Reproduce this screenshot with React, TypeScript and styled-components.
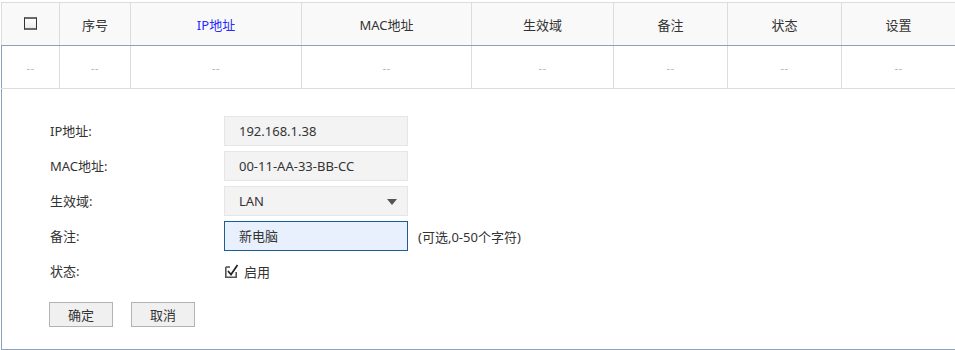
import React from 'react';
import styled, { createGlobalStyle } from 'styled-components';

const GlobalStyle = createGlobalStyle`
  html, body {
    margin: 0;
    padding: 0;
    background: #ffffff;
  }
  body {
    font-family: "Noto Sans", "Noto Sans CJK SC", sans-serif;
    font-size: 13px;
    color: #333333;
  }
  * {
    box-sizing: border-box;
  }
`;

const columns = [
  { key: 'check', title: '', width: 58 },
  { key: 'index', title: '序号', width: 71 },
  { key: 'ip', title: 'IP地址', width: 171, active: true },
  { key: 'mac', title: 'MAC地址', width: 170 },
  { key: 'zone', title: '生效域', width: 142 },
  { key: 'note', title: '备注', width: 114 },
  { key: 'status', title: '状态', width: 114 },
  { key: 'setting', title: '设置', width: 114 },
];

const Page = styled.div`
  width: 955px;
  padding-top: 2px;
  padding-left: 1px;
`;

const Row = styled.div<{ head?: boolean }>`
  display: grid;
  grid-template-columns: ${columns.map(c => `${c.width}px`).join(' ')};
  height: ${props => (props.head ? 44 : 43)}px;
  background: ${props => (props.head ? '#f9f9f9' : '#ffffff')};
  border-top: ${props => (props.head ? '1px solid #dcdcdc' : 'none')};
  border-bottom: 1px solid ${props => (props.head ? '#8ba2ba' : '#dcdcdc')};
`;

const Cell = styled.div<{ first?: boolean; head?: boolean; active?: boolean }>`
  display: flex;
  align-items: center;
  justify-content: center;
  border-left: 1px solid ${props => (props.first && !props.head ? '#8ba2ba' : '#dcdcdc')};
  color: ${props => (props.active ? '#2b2bff' : '#333333')};
  font-size: 13px;
`;

const Dash = styled.span`
  color: #b5b5b5;
  font-size: 11px;
  letter-spacing: 0.5px;
`;

const HeadBox = styled.span`
  display: inline-block;
  width: 13px;
  height: 13px;
  border: 1px solid #333;
  border-top: 2px solid #6a6a6a;
  border-bottom: 2px solid #6a6a6a;
  background: linear-gradient(#ffffff, #ececec);
  margin-top: -2px;
`;

const Panel = styled.div`
  border-left: 1px solid #8ba2ba;
  border-bottom: 1px solid #8ba2ba;
  padding: 27px 0 22px 48px;
  height: 261px;
`;

const Form = styled.div`
  display: grid;
  grid-template-columns: 174px auto;
  row-gap: 5px;
  align-items: center;
`;

const Label = styled.div`
  font-size: 13px;
  color: #333;
  line-height: 30px;
`;

const Field = styled.div`
  display: flex;
  align-items: center;
  gap: 10px;
  height: 30px;
`;

const TextBox = styled.div<{ focused?: boolean }>`
  position: relative;
  width: 184px;
  height: 30px;
  line-height: 28px;
  padding-left: 14px;
  font-size: 13px;
  color: #333;
  background: ${props => (props.focused ? '#e8f0fd' : '#f3f3f3')};
  border: 1px solid ${props => (props.focused ? '#1d5d96' : '#e6e6e6')};
`;

const Arrow = styled.span`
  position: absolute;
  right: 10px;
  top: 12px;
  width: 0;
  height: 0;
  border-left: 5px solid transparent;
  border-right: 5px solid transparent;
  border-top: 6px solid #555;
`;

const Hint = styled.span`
  font-size: 13px;
  color: #333;
`;

const CheckLabel = styled.label`
  display: flex;
  align-items: center;
  gap: 5px;
  font-size: 13px;
  color: #333;
  margin-left: 1px;
`;

const Buttons = styled.div`
  display: flex;
  gap: 18px;
  margin-top: 16px;
  margin-left: -1px;
`;

const Button = styled.button`
  width: 64px;
  height: 25px;
  padding: 0;
  font-family: inherit;
  font-size: 13px;
  color: #333;
  background: #f0f0f0;
  border: 1px solid #b3b3b3;
`;

const CheckIcon = () => (
  <svg width="14" height="16" viewBox="0 0 14 16">
    <path d="M0.8 4 V14.2 H11.2 V9" fill="none" stroke="#555" strokeWidth="1.6" />
    <path d="M0.8 4 H5" fill="none" stroke="#555" strokeWidth="1.6" />
    <path d="M3 8 L6 11.5 L12.5 2" fill="none" stroke="#222" strokeWidth="1.7" />
  </svg>
);

export default function App() {
  return (
    <Page>
      <GlobalStyle />
      <Row head>
        {columns.map((c, i) => (
          <Cell key={c.key} head first={i === 0} active={c.active}>
            {i === 0 ? <HeadBox /> : c.title}
          </Cell>
        ))}
      </Row>
      <Row>
        {columns.map((c, i) => (
          <Cell key={c.key} first={i === 0}>
            <Dash>--</Dash>
          </Cell>
        ))}
      </Row>
      <Panel>
        <Form>
          <Label>IP地址:</Label>
          <Field>
            <TextBox>192.168.1.38</TextBox>
          </Field>
          <Label>MAC地址:</Label>
          <Field>
            <TextBox>00-11-AA-33-BB-CC</TextBox>
          </Field>
          <Label>生效域:</Label>
          <Field>
            <TextBox>
              LAN
              <Arrow />
            </TextBox>
          </Field>
          <Label>备注:</Label>
          <Field>
            <TextBox focused>新电脑</TextBox>
            <Hint>(可选,0-50个字符)</Hint>
          </Field>
          <Label>状态:</Label>
          <Field>
            <CheckLabel>
              <CheckIcon />
              启用
            </CheckLabel>
          </Field>
        </Form>
        <Buttons>
          <Button>确定</Button>
          <Button>取消</Button>
        </Buttons>
      </Panel>
    </Page>
  );
}
